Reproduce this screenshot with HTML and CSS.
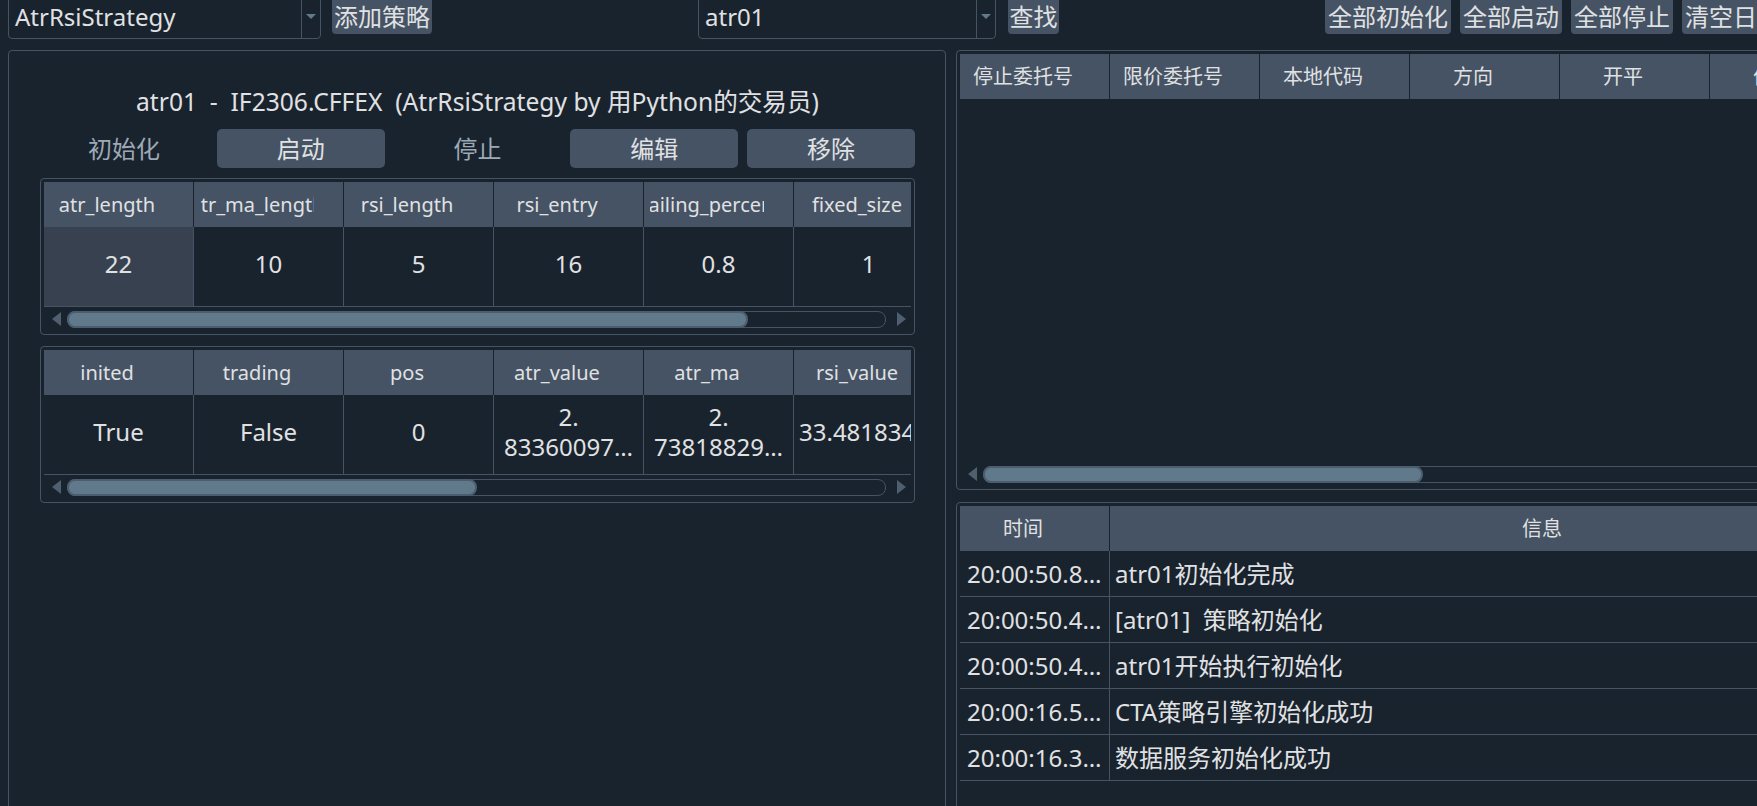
FILE: index.html
```html
<!DOCTYPE html>
<html lang="zh">
<head>
<meta charset="utf-8">
<title>CTA策略</title>
<link rel="stylesheet" href="styles.css">
</head>
<body>
<div class="app">
  <div class="topbar">
    <div class="combo combo-strategy">
      <span class="combo-text">AtrRsiStrategy</span>
      <span class="combo-drop"><i class="arrow-down"></i></span>
    </div>
    <button class="btn btn-add">添加策略</button>
    <div class="combo combo-search">
      <span class="combo-text">atr01</span>
      <span class="combo-drop"><i class="arrow-down"></i></span>
    </div>
    <button class="btn btn-find">查找</button>
    <div class="actions">
      <button class="btn btn-w5">全部初始化</button>
      <button class="btn btn-w4">全部启动</button>
      <button class="btn btn-w4">全部停止</button>
      <button class="btn btn-w4">清空日志</button>
    </div>
  </div>

  <div class="main">
    <div class="left-panel">
      <div class="strategy-title">atr01  -  IF2306.CFFEX  (AtrRsiStrategy by 用Python的交易员)</div>
      <div class="ctrl-row">
        <div class="ctrl-btn disabled">初始化</div>
        <div class="ctrl-btn">启动</div>
        <div class="ctrl-btn disabled">停止</div>
        <div class="ctrl-btn">编辑</div>
        <div class="ctrl-btn">移除</div>
      </div>

      <div class="tframe">
        <div class="tview">
          <div class="thead">
            <div class="th"><div class="th-clip"><span>atr_length</span></div></div>
            <div class="th"><div class="th-clip"><span>atr_ma_length</span></div></div>
            <div class="th"><div class="th-clip"><span>rsi_length</span></div></div>
            <div class="th"><div class="th-clip"><span>rsi_entry</span></div></div>
            <div class="th"><div class="th-clip"><span>trailing_percent</span></div></div>
            <div class="th"><div class="th-clip"><span>fixed_size</span></div></div>
          </div>
          <div class="trow">
            <div class="td current"><span>22</span></div>
            <div class="td"><span>10</span></div>
            <div class="td"><span>5</span></div>
            <div class="td"><span>16</span></div>
            <div class="td"><span>0.8</span></div>
            <div class="td"><span>1</span></div>
          </div>
          <div class="hscroll">
            <i class="arrow-left"></i>
            <div class="track"><div class="handle" style="width:681px"></div></div>
            <i class="arrow-right"></i>
          </div>
        </div>
      </div>

      <div class="tframe">
        <div class="tview">
          <div class="thead">
            <div class="th"><div class="th-clip"><span>inited</span></div></div>
            <div class="th"><div class="th-clip"><span>trading</span></div></div>
            <div class="th"><div class="th-clip"><span>pos</span></div></div>
            <div class="th"><div class="th-clip"><span>atr_value</span></div></div>
            <div class="th"><div class="th-clip"><span>atr_ma</span></div></div>
            <div class="th"><div class="th-clip"><span>rsi_value</span></div></div>
          </div>
          <div class="trow">
            <div class="td"><span>True</span></div>
            <div class="td"><span>False</span></div>
            <div class="td"><span>0</span></div>
            <div class="td"><span>2.<br>83360097…</span></div>
            <div class="td"><span>2.<br>73818829…</span></div>
            <div class="td left"><span>33.48183447</span></div>
          </div>
          <div class="hscroll">
            <i class="arrow-left"></i>
            <div class="track"><div class="handle" style="width:410px"></div></div>
            <i class="arrow-right"></i>
          </div>
        </div>
      </div>
    </div>

    <div class="right-col">
      <div class="sframe">
        <div class="tview">
          <div class="thead">
            <div class="th"><div class="th-clip"><span>停止委托号</span></div></div>
            <div class="th"><div class="th-clip"><span>限价委托号</span></div></div>
            <div class="th"><div class="th-clip"><span>本地代码</span></div></div>
            <div class="th"><div class="th-clip"><span>方向</span></div></div>
            <div class="th"><div class="th-clip"><span>开平</span></div></div>
            <div class="th"><div class="th-clip"><span>价格</span></div></div>
            <div class="th"><div class="th-clip"><span>数量</span></div></div>
          </div>
          <div class="tbody-empty"></div>
          <div class="hscroll">
            <i class="arrow-left"></i>
            <div class="track"><div class="handle" style="width:440px"></div></div>
            <i class="arrow-right"></i>
          </div>
        </div>
      </div>

      <div class="lframe">
        <div class="tview">
          <div class="thead">
            <div class="th"><div class="th-clip"><span>时间</span></div></div>
            <div class="th th-stretch"><div class="th-clip"><span>信息</span></div></div>
          </div>
          <div class="lrow"><div class="ltime">20:00:50.8…</div><div class="lmsg">atr01初始化完成</div></div>
          <div class="lrow"><div class="ltime">20:00:50.4…</div><div class="lmsg">[atr01]  策略初始化</div></div>
          <div class="lrow"><div class="ltime">20:00:50.4…</div><div class="lmsg">atr01开始执行初始化</div></div>
          <div class="lrow"><div class="ltime">20:00:16.5…</div><div class="lmsg">CTA策略引擎初始化成功</div></div>
          <div class="lrow"><div class="ltime">20:00:16.3…</div><div class="lmsg">数据服务初始化成功</div></div>
        </div>
      </div>
    </div>
  </div>
</div>
</body>
</html>
```

FILE: styles.css
```css
* { box-sizing: border-box; }

html, body {
  margin: 0;
  padding: 0;
  background: #19232D;
}

body {
  width: 1757px;
  height: 806px;
  overflow: hidden;
  font-family: "Noto Sans", "Noto Sans CJK SC", sans-serif;
  font-size: 24px;
  color: #E0E1E3;
}

.app {
  width: 2100px;
}

/* ---------- top bar ---------- */
.topbar {
  display: flex;
  align-items: flex-start;
  height: 44px;
  margin-top: -5px;
  padding-left: 8px;
}

.combo {
  display: flex;
  flex-shrink: 0;
  height: 44px;
  border: 1px solid #455364;
  border-radius: 4px;
  background: #19232D;
}

.combo-strategy { width: 313px; }
.combo-search { width: 298px; margin-left: 266px; }

.combo-text {
  flex: 1;
  display: flex;
  align-items: center;
  padding-left: 6px;
  line-height: 30px;
  white-space: nowrap;
}

.combo-drop {
  width: 19px;
  border-left: 1px solid #455364;
  display: flex;
  align-items: center;
  justify-content: center;
}

.arrow-down {
  display: block;
  width: 0;
  height: 0;
  border-left: 5px solid transparent;
  border-right: 5px solid transparent;
  border-top: 5px solid #60798B;
  margin-top: -2px;
}

.btn {
  flex-shrink: 0;
  height: 38px;
  margin-top: 1px;
  padding: 3px 0 0;
  border: none;
  border-radius: 4px;
  background: #455364;
  color: #E0E1E3;
  font: inherit;
  line-height: 30px;
  display: flex;
  align-items: center;
  justify-content: center;
  white-space: nowrap;
}

.btn-add { width: 100px; margin-left: 11px; }
.btn-find { width: 51px; margin-left: 12px; }

.actions {
  display: flex;
  gap: 9px;
  margin-left: 266px;
}

.btn-w5 { width: 126px; }
.btn-w4 { width: 102px; }

/* ---------- main ---------- */
.main {
  display: flex;
  gap: 10px;
  margin-top: 11px;
  padding-left: 8px;
}

.left-panel {
  flex: 0 0 938px;
  width: 938px;
  min-width: 0;
  height: 800px;
  border: 1px solid #455364;
  border-radius: 4px;
  padding: 34px 30px 0 31px;
  overflow: hidden;
}

.strategy-title {
  height: 34px;
  line-height: 34px;
  font-size: 24.6px;
  text-align: center;
  white-space: pre;
}

.ctrl-row {
  display: flex;
  gap: 9px;
  margin-top: 10px;
}

.ctrl-btn {
  flex: 1;
  min-width: 0;
  height: 39px;
  border-radius: 5px;
  background: #455364;
  display: flex;
  align-items: center;
  justify-content: center;
  line-height: 30px;
}

.ctrl-btn.disabled {
  background: transparent;
  color: #9DA9B5;
}

/* ---------- tables ---------- */
.tframe {
  height: 157px;
  margin-top: 10px;
  border: 1px solid #455364;
  border-radius: 4px;
  padding: 3px;
  min-width: 0;
}

.tframe + .tframe { margin-top: 11px; }

.tview {
  height: 100%;
  min-width: 0;
  overflow: hidden;
  display: flex;
  flex-direction: column;
}

.thead {
  display: flex;
  flex: 0 0 45px;
  min-width: 0;
}

.th {
  flex: 0 0 150px;
  width: 150px;
  min-width: 0;
  height: 45px;
  background: #455364;
  border-right: 1px solid #19232D;
  font-size: 20px;
  display: flex;
  align-items: center;
  overflow: hidden;
}

.th-stretch { flex: 0 0 888px; width: 888px; }

.th-clip {
  flex: 1;
  min-width: 0;
  margin: 0 29px 0 6px;
  overflow: hidden;
  display: flex;
  justify-content: center;
  white-space: nowrap;
  line-height: 28px;
}

.th-clip span { flex-shrink: 0; }

.trow {
  display: flex;
  flex: 0 0 80px;
  min-width: 0;
}

.td {
  flex: 0 0 150px;
  width: 150px;
  min-width: 0;
  height: 80px;
  padding-bottom: 5px;
  border-right: 1px solid #455364;
  border-bottom: 1px solid #455364;
  display: flex;
  align-items: center;
  justify-content: center;
  text-align: center;
  line-height: 30px;
  white-space: nowrap;
  overflow: hidden;
}

.td span { flex-shrink: 0; }

.td.current { background: #37414F; }

.td.left {
  justify-content: flex-start;
  padding-left: 5px;
}

.tbody-empty { flex: 1; }

.hscroll {
  flex: 0 0 24px;
  display: flex;
  align-items: flex-start;
  padding: 4px 5px 0 8px;
}

.arrow-left, .arrow-right {
  display: block;
  flex-shrink: 0;
  width: 0;
  height: 0;
  margin-top: 1px;
  border-top: 7.5px solid transparent;
  border-bottom: 7.5px solid transparent;
}

.arrow-left { border-right: 9px solid #4f5f70; }
.arrow-right { border-left: 9px solid #4f5f70; }

.track {
  flex: 1;
  min-width: 0;
  height: 17px;
  margin: 0 11px 0 6px;
  border: 1px solid #455364;
  border-radius: 8px;
  display: flex;
}

.handle {
  flex-shrink: 0;
  height: 17px;
  margin: -1px 0 0 -1px;
  background: #60798B;
  border: 2px solid #4b5d6e;
  border-radius: 8px;
}

/* ---------- right column ---------- */
.right-col {
  flex: 0 0 1046px;
  width: 1046px;
  min-width: 0;
  display: flex;
  flex-direction: column;
  gap: 12px;
}

.sframe {
  height: 440px;
  border: 1px solid #455364;
  border-radius: 4px;
  padding: 3px;
}

.lframe {
  height: 400px;
  border: 1px solid #455364;
  border-radius: 4px;
  padding: 3px;
}

.lrow {
  display: flex;
  flex: 0 0 46px;
  border-bottom: 1px solid #455364;
}

.ltime {
  flex: 0 0 150px;
  border-right: 1px solid #455364;
  padding-left: 7px;
  display: flex;
  align-items: center;
  white-space: nowrap;
  overflow: hidden;
  line-height: 30px;
}

.lmsg {
  flex: 1;
  padding-left: 5px;
  display: flex;
  align-items: center;
  white-space: pre;
  line-height: 30px;
}
```
